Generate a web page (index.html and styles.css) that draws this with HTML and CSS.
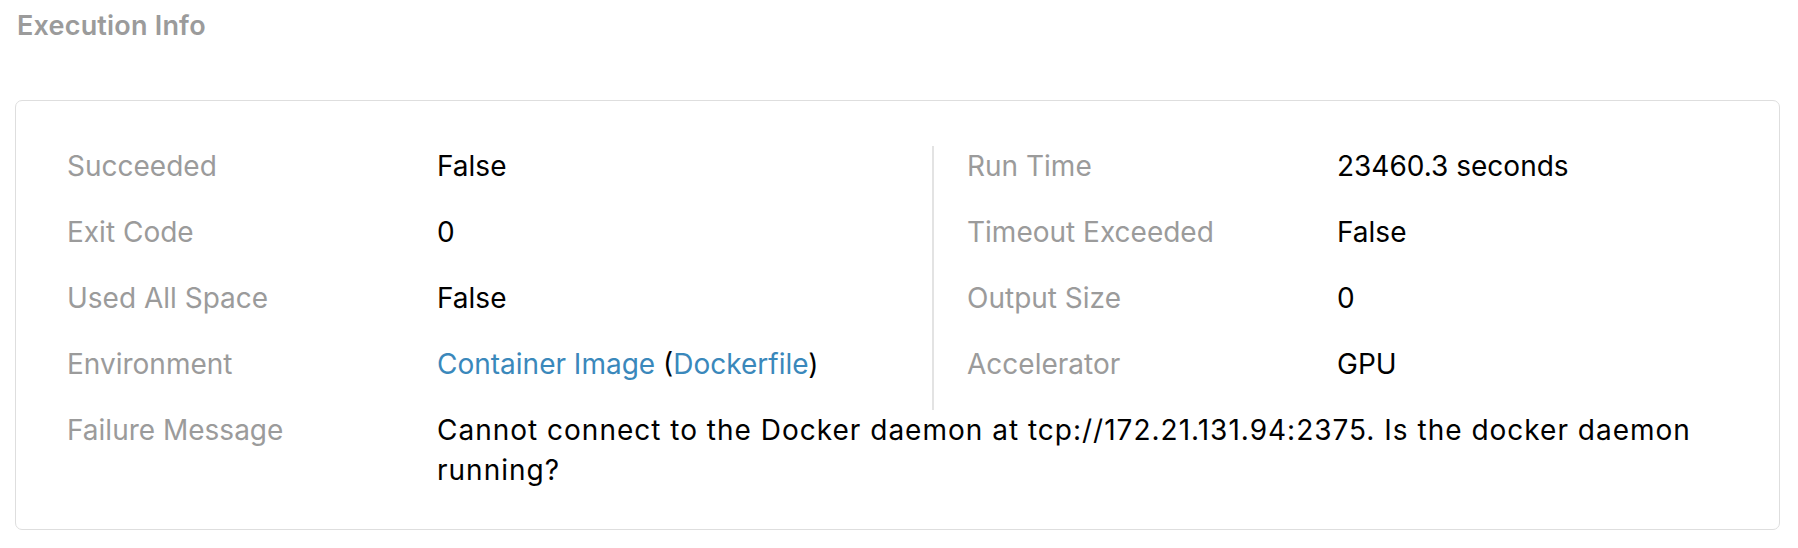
FILE: index.html
```html
<!DOCTYPE html>
<html lang="en">
<head>
<meta charset="utf-8">
<title>Execution Info</title>
<link rel="stylesheet" href="styles.css">
</head>
<body>
<div class="page">
  <h2 class="title">Execution Info</h2>
  <section class="card">
    <div class="grid">
      <div class="col col-left">
        <div class="row"><div class="label">Succeeded</div><div class="value">False</div></div>
        <div class="row"><div class="label">Exit Code</div><div class="value">0</div></div>
        <div class="row"><div class="label">Used All Space</div><div class="value">False</div></div>
        <div class="row"><div class="label">Environment</div><div class="value"><a class="link" href="#">Container Image</a> (<a class="link" href="#">Dockerfile</a>)</div></div>
      </div>
      <div class="col col-right">
        <div class="row"><div class="label">Run Time</div><div class="value">23460.3 seconds</div></div>
        <div class="row"><div class="label">Timeout Exceeded</div><div class="value">False</div></div>
        <div class="row"><div class="label">Output Size</div><div class="value">0</div></div>
        <div class="row"><div class="label">Accelerator</div><div class="value">GPU</div></div>
      </div>
    </div>
    <div class="row row-full"><div class="label">Failure Message</div><div class="value value-wrap">Cannot connect to the Docker daemon at tcp://172.21.131.94:2375. Is the docker daemon running?</div></div>
  </section>
</div>
</body>
</html>
```
FILE: styles.css
```css
html, body {
  margin: 0;
  padding: 0;
  background: #ffffff;
}
body {
  font-family: Inter, "Noto Sans", "Liberation Sans", sans-serif;
  font-size: 28px;
  line-height: 40px;
  color: #000000;
}
.page {
  padding: 6px 18px 0 15px;
}
.title {
  margin: 0 0 54px 0;
  padding-left: 2px;
  font-size: 27px;
  line-height: 40px;
  font-weight: 600;
  letter-spacing: 0.2px;
  color: #9b9b9b;
}
.card {
  border: 1px solid #dedede;
  border-radius: 7px;
  padding: 45px 51px 39px 51px;
}
.grid {
  display: flex;
}
.col-left {
  width: 865px;
}
.col-right {
  flex: 1;
  border-left: 2px solid #e3e3e3;
  padding-left: 33px;
}
.row {
  display: flex;
  margin-bottom: 26px;
}
.row-full {
  margin-bottom: 0;
}
.label {
  width: 370px;
  flex: none;
  color: #9b9b9b;
}
.value {
  flex: 1;
  color: #000000;
}
.value-wrap {
  letter-spacing: 1px;
}
.link {
  color: #3a88bb;
  text-decoration: none;
}
```
